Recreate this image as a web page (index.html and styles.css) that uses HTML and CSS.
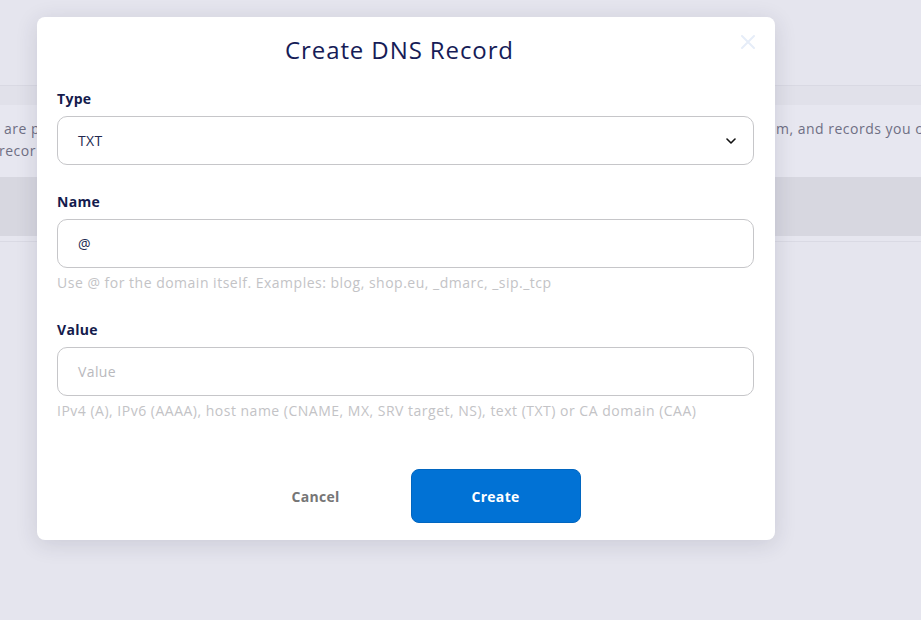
FILE: index.html
```html
<!DOCTYPE html>
<html lang="en">
<head>
<meta charset="utf-8">
<title>Create DNS Record</title>
<link rel="stylesheet" href="styles.css">
</head>
<body>
<div class="page">
  <div class="topbar"></div>
  <div class="band"></div>
  <div class="note">
    <div class="note-left">
      <div class="l1">are p</div>
      <div class="l2">recor</div>
    </div>
    <div class="note-mid"></div>
    <div class="note-right">
      <div class="l1">m, and records you can add yourself.</div>
    </div>
  </div>
  <div class="thead"></div>
  <div class="strip"></div>
</div>

<div class="modal">
  <button class="close" aria-label="Close">
    <svg width="14" height="14" viewBox="0 0 14 14"><path d="M1 1L13 13M13 1L1 13" stroke="#e6edf8" stroke-width="2" stroke-linecap="round"/></svg>
  </button>
  <h1 class="title">Create DNS Record</h1>

  <div class="field first">
    <label class="label">Type</label>
    <div class="control select">
      <span class="value">TXT</span>
      <svg class="chev" width="10" height="6" viewBox="0 0 10 6"><path d="M1 1L5 5L9 1" fill="none" stroke="#111" stroke-width="1.6" stroke-linecap="round" stroke-linejoin="round"/></svg>
    </div>
  </div>

  <div class="field gap">
    <label class="label">Name</label>
    <div class="control"><span class="value">@</span></div>
    <div class="hint">Use @ for the domain itself. Examples: blog, shop.eu, _dmarc, _sip._tcp</div>
  </div>

  <div class="field gap">
    <label class="label">Value</label>
    <div class="control"><span class="placeholder">Value</span></div>
    <div class="hint">IPv4 (A), IPv6 (AAAA), host name (CNAME, MX, SRV target, NS), text (TXT) or CA domain (CAA)</div>
  </div>

  <div class="actions">
    <button class="btn cancel">Cancel</button>
    <button class="btn create">Create</button>
  </div>
</div>
</body>
</html>
```

FILE: styles.css
```css
* { box-sizing: border-box; }
html, body { margin: 0; padding: 0; }
body {
  background: #e5e5ee;
  font-family: "Open Sans", "Liberation Sans", sans-serif;
  width: 921px;
  height: 620px;
  overflow: hidden;
}
.page { width: 921px; }
.topbar { height: 86px; border-bottom: 1px solid #d9d9e3; }
.band { height: 19px; background: #e1e1ea; }
.note {
  height: 72px;
  background: #e7e7f0;
  display: grid;
  grid-template-columns: 37px 738px 1fr;
  color: #6f6f84;
  font-size: 14px;
  line-height: 22px;
  letter-spacing: 0.5px;
  padding-top: 13px;
  overflow: hidden;
}
.note-left, .note-right { white-space: nowrap; overflow: hidden; }
.note-left .l1 { padding-left: 4px; }
.note-left .l2 { margin-left: -1px; }
.note-right { padding-left: 1px; }
.thead { height: 59px; background: #d7d7e0; }
.strip { height: 6px; background: #e6e6ef; border-bottom: 1px solid #dadae4; }

.modal {
  position: absolute;
  left: 37px;
  top: 17px;
  width: 738px;
  height: 523px;
  background: #fff;
  border-radius: 8px;
  box-shadow: 0 4px 22px rgba(40, 40, 70, 0.14);
  padding: 17px 21px 17px 20px;
}
.close {
  position: absolute;
  right: 20px;
  top: 18px;
  background: none;
  border: 0;
  padding: 0;
  width: 14px;
  height: 14px;
  display: flex;
}
.title {
  margin: 0;
  padding-right: 12px;
  text-align: center;
  font-size: 24px;
  line-height: 32px;
  font-weight: 500;
  color: #161c57;
  letter-spacing: 0.9px;
}
.field { display: flex; flex-direction: column; }
.field.first { margin-top: 23px; }
.field.gap { margin-top: 27px; }
.label {
  font-size: 14px;
  line-height: 20px;
  font-weight: 700;
  color: #141b4d;
  margin-bottom: 7px;
  letter-spacing: 0.3px;
}
.control {
  height: 49px;
  border: 1px solid #c6c6c9;
  border-radius: 10px;
  display: flex;
  align-items: center;
  justify-content: space-between;
  padding: 0 20px;
  font-size: 14px;
  letter-spacing: 0.4px;
}
.value { color: #22284f; }
.placeholder { color: #b9b9bd; }
.chev { margin-right: -3px; }
.hint {
  margin-top: 5px;
  font-size: 14px;
  line-height: 20px;
  color: #c3c3c6;
  letter-spacing: 0.5px;
}
.actions {
  margin-top: 48px;
  display: flex;
  justify-content: center;
  gap: 10px;
}
.btn {
  width: 170px;
  height: 54px;
  border-radius: 8px;
  border: 0;
  font-family: inherit;
  font-size: 14px;
  font-weight: 700;
  letter-spacing: 0.3px;
}
.cancel { background: #fff; color: #767676; }
.create { background: #0172d5; color: #fff; border: 1px solid #0166c0; }
```
